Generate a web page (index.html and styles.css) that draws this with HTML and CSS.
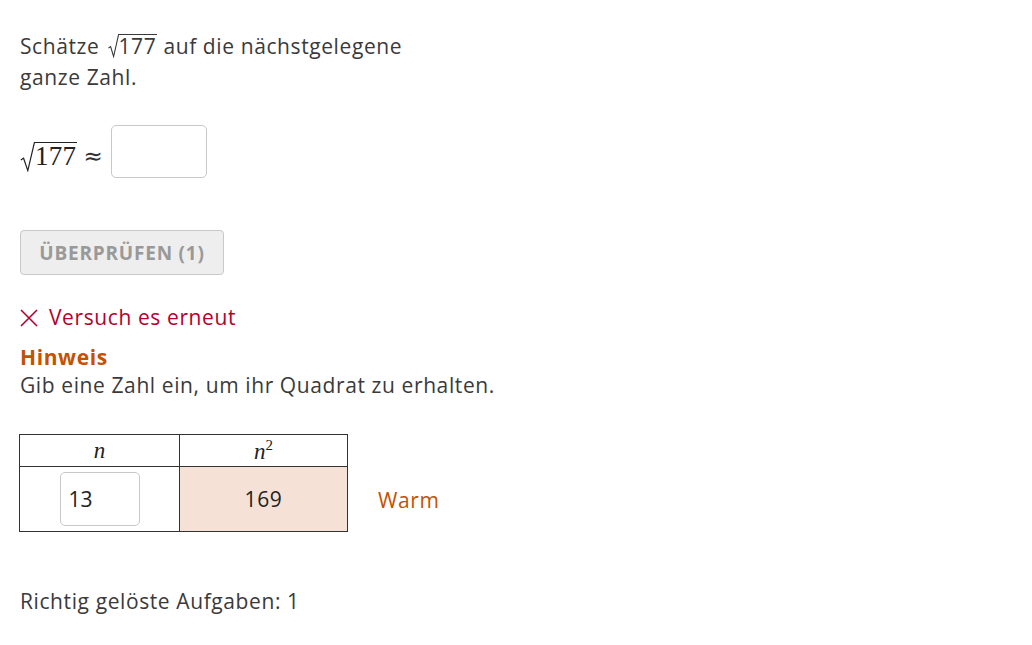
FILE: index.html
```html
<!DOCTYPE html>
<html lang="de">
<head>
<meta charset="UTF-8">
<title>Wurzel schätzen</title>
<link rel="stylesheet" href="styles.css">
</head>
<body>
<div class="aufgabe">
  <p class="frage">Schätze <span class="wurzel-text"><svg class="haken-klein" width="11" height="24" viewBox="0 0 11 24"><path d="M0.5 14 L2.6 12.6 L5.6 22.5 L10.6 0.6 L11 0.6" fill="none" stroke="#3a3a3a" stroke-width="1.1"/></svg><span class="radikand">177</span></span> auf die nächstgelegene ganze Zahl.</p>

  <div class="gleichung">
    <div class="formel">
      <svg class="haken" width="15" height="30" viewBox="0 0 15 30"><path d="M0.8 18 L3.6 16.2 L7.8 28.6 L14.4 0.6 L15 0.6" fill="none" stroke="#222" stroke-width="1.2"/></svg>
      <span class="radikand-gross">177</span>
      <span class="ungefaehr">≈</span>
    </div>
    <input class="antwort" type="text">
  </div>

  <button class="pruefen" disabled>Überprüfen (1)</button>

  <p class="fehler"><svg class="kreuz" width="18" height="18" viewBox="0 0 18 18"><path d="M1 1 L17 17 M17 1 L1 17" stroke="#b5002c" stroke-width="1.6"/></svg>Versuch es erneut</p>

  <div class="hinweis">
    <h3>Hinweis</h3>
    <p>Gib eine Zahl ein, um ihr Quadrat zu erhalten.</p>
  </div>

  <div class="tabelle-zeile">
    <table class="quadrate">
      <tr>
        <th><i>n</i></th>
        <th><i>n</i><sup>2</sup></th>
      </tr>
      <tr>
        <td><input class="zahl" type="text" value="13"></td>
        <td class="warm">169</td>
      </tr>
    </table>
    <span class="temperatur">Warm</span>
  </div>

  <p class="zaehler">Richtig gelöste Aufgaben: 1</p>
</div>
</body>
</html>
```

FILE: styles.css
```css
body { margin: 0; background: #fff; color: #3a3a3a; font-family: "Open Sans", sans-serif; font-size: 21px; letter-spacing: 0.6px; }
.aufgabe { padding: 31px 20px; }
p { margin: 0; }

.frage { max-width: 420px; line-height: 31px; }
.haken-klein { vertical-align: -4px; margin-left: 2px; }
.radikand { display: inline-block; line-height: 22px; border-top: 1px solid #3a3a3a; padding-right: 1px; }

.gleichung { display: flex; align-items: flex-start; margin-top: 32px; }
.formel { display: flex; align-items: flex-start; margin-top: 17px; font-family: "Liberation Serif", serif; font-size: 27px; color: #222; letter-spacing: 0.3px; }
.radikand-gross { line-height: 26px; border-top: 1px solid #222; padding-right: 1px; }
.ungefaehr { font-family: "DejaVu Sans", sans-serif; font-size: 23px; line-height: 26px; margin: 1px 0 0 6px; color: #333; }
.antwort { width: 96px; height: 53px; box-sizing: border-box; border: 1px solid #c8c8c8; border-radius: 5px; margin-left: 8px; }

.pruefen { display: block; margin-top: 52px; width: 204px; height: 45px; background: #eee; border: 1px solid #c8c8c8; border-radius: 4px; color: #999; font-family: "Open Sans", sans-serif; font-size: 19px; font-weight: bold; text-transform: uppercase; letter-spacing: 0.8px; }

.fehler { margin-top: 30px; color: #b5002c; line-height: 24px; display: flex; align-items: center; gap: 11px; }
.kreuz { margin-top: 1px; }

.hinweis { margin-top: 14px; line-height: 28px; }
.hinweis h3 { margin: 0; color: #c45200; font-size: 21px; }

.tabelle-zeile { display: flex; align-items: flex-end; gap: 30px; margin-top: 35px; }
.quadrate { border-collapse: collapse; margin-left: -1px; }
.quadrate th, .quadrate td { border: 1px solid #333; text-align: center; padding: 0; }
.quadrate th { height: 31px; font-family: "Liberation Serif", serif; font-weight: normal; font-size: 23px; color: #222; letter-spacing: 0; }
.quadrate th:first-child { width: 159px; }
.quadrate th:last-child { width: 167px; }
.quadrate sup { font-size: 15px; }
.quadrate td { height: 64px; color: #222; }
.quadrate td.warm { background: #f5e1d5; }
.zahl { width: 80px; height: 54px; box-sizing: border-box; border: 1px solid #c8c8c8; border-radius: 5px; padding: 0 8px; font-family: "Open Sans", sans-serif; font-size: 21px; color: #222; }
.temperatur { color: #c45200; margin-bottom: 18px; }

.zaehler { margin-top: 55px; line-height: 28px; }
```
